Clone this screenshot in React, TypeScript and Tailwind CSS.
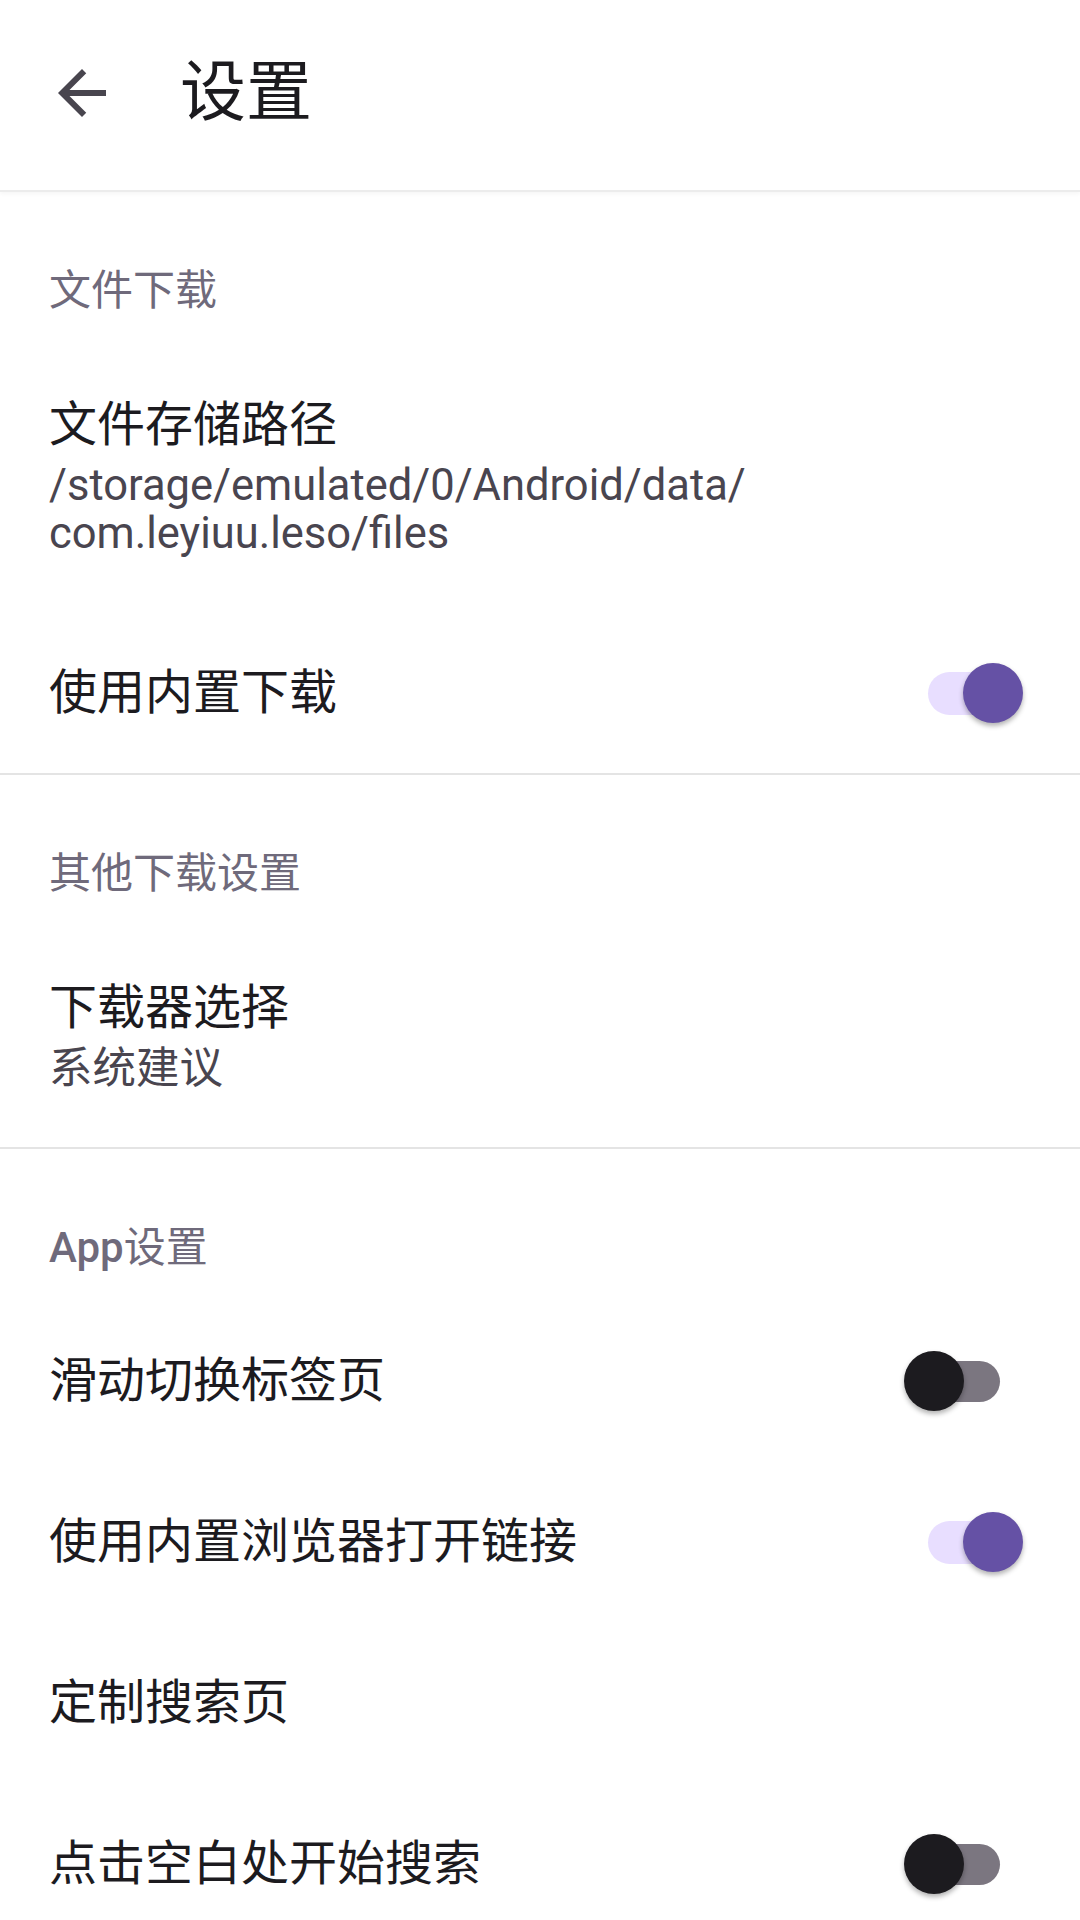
import React, { useState } from 'react';

const font = { fontFamily: 'Roboto, "Noto Sans CJK SC", sans-serif' };

function Toggle({ on }: { on: boolean }) {
  if (on) {
    return (
      <div className="relative w-[95px] h-[60px] mr-[57px] shrink-0">
        <div className="absolute left-0 top-[9px] w-[86px] h-[43px] rounded-full bg-[#e8deff]" />
        <div className="absolute right-0 top-0 w-[60px] h-[60px] rounded-full bg-[#6551a5] shadow-[0_3px_5px_rgba(0,0,0,0.3)]" />
      </div>
    );
  }
  return (
    <div className="relative w-[96px] h-[60px] mr-[80px] shrink-0">
      <div className="absolute right-0 top-[10px] w-[86px] h-[41px] rounded-full bg-[#7b7680]" />
      <div className="absolute left-0 top-0 w-[60px] h-[60px] rounded-full bg-[#1c1b1f] shadow-[0_3px_5px_rgba(0,0,0,0.3)]" />
    </div>
  );
}

function SectionHeader({ children }: { children: React.ReactNode }) {
  return (
    <div className="pl-[49px] pt-[75px] pb-[28px] text-[42px] leading-[48px] text-[#6f6a7b]">
      {children}
    </div>
  );
}

function TextItem({ title, summary }: { title: string; summary: string[] }) {
  return (
    <div className="pl-[49px] pr-[49px] pt-[54px] pb-[54px]">
      <div className="text-[48px] leading-[56px] text-[#1c1b1f]">{title}</div>
      <div className="mt-[9px] text-[43.5px] leading-[48px] text-[#49454f]">
        {summary.map(s => (
          <div key={s}>{s}</div>
        ))}
      </div>
    </div>
  );
}

function SwitchItem({ title, on }: { title: string; on: boolean }) {
  return (
    <div className="h-[161px] flex items-center justify-between pl-[49px]">
      <span className="text-[48px] leading-[56px] text-[#1c1b1f]">{title}</span>
      <Toggle on={on} />
    </div>
  );
}

function PlainItem({ title }: { title: string }) {
  return (
    <div className="h-[161px] flex items-center pl-[49px]">
      <span className="text-[48px] leading-[56px] text-[#1c1b1f]">{title}</span>
    </div>
  );
}

export default function App() {
  const [builtinDownload] = useState(true);
  const [swipeTabs] = useState(false);
  const [builtinBrowser] = useState(true);
  const [tapToSearch] = useState(false);

  return (
    <div className="w-[1080px] h-[1920px] bg-white overflow-hidden" style={font}>
      {/* Top bar */}
      <div className="relative h-[192px] flex items-center border-b-2 border-[#ececec] shadow-[0_2px_4px_rgba(0,0,0,0.04)]">
        <div className="w-[72px] h-[72px] ml-[46px] -mt-[4px]">
          <svg viewBox="0 0 24 24" className="w-[72px] h-[72px]" fill="#48454e">
            <path d="M20 11H7.83l5.59-5.59L12 4l-8 8 8 8 1.41-1.41L7.83 13H20v-2z" />
          </svg>
        </div>
        <h1 className="ml-[62px] -mt-[4px] text-[66px] leading-[72px] text-[#1c1b1f]">设置</h1>
      </div>

      <SectionHeader>文件下载</SectionHeader>
      <TextItem title="文件存储路径" summary={['/storage/emulated/0/Android/data/', 'com.leyiuu.leso/files']} />
      <SwitchItem title="使用内置下载" on={builtinDownload} />
      <div className="h-[2px] bg-[#e4e4e4]" />

      <SectionHeader>其他下载设置</SectionHeader>
      <TextItem title="下载器选择" summary={['系统建议']} />
      <div className="h-[2px] bg-[#e4e4e4]" />

      <SectionHeader>
        <span className="font-medium">App</span>设置
      </SectionHeader>
      <SwitchItem title="滑动切换标签页" on={swipeTabs} />
      <SwitchItem title="使用内置浏览器打开链接" on={builtinBrowser} />
      <PlainItem title="定制搜索页" />
      <SwitchItem title="点击空白处开始搜索" on={tapToSearch} />
    </div>
  );
}
